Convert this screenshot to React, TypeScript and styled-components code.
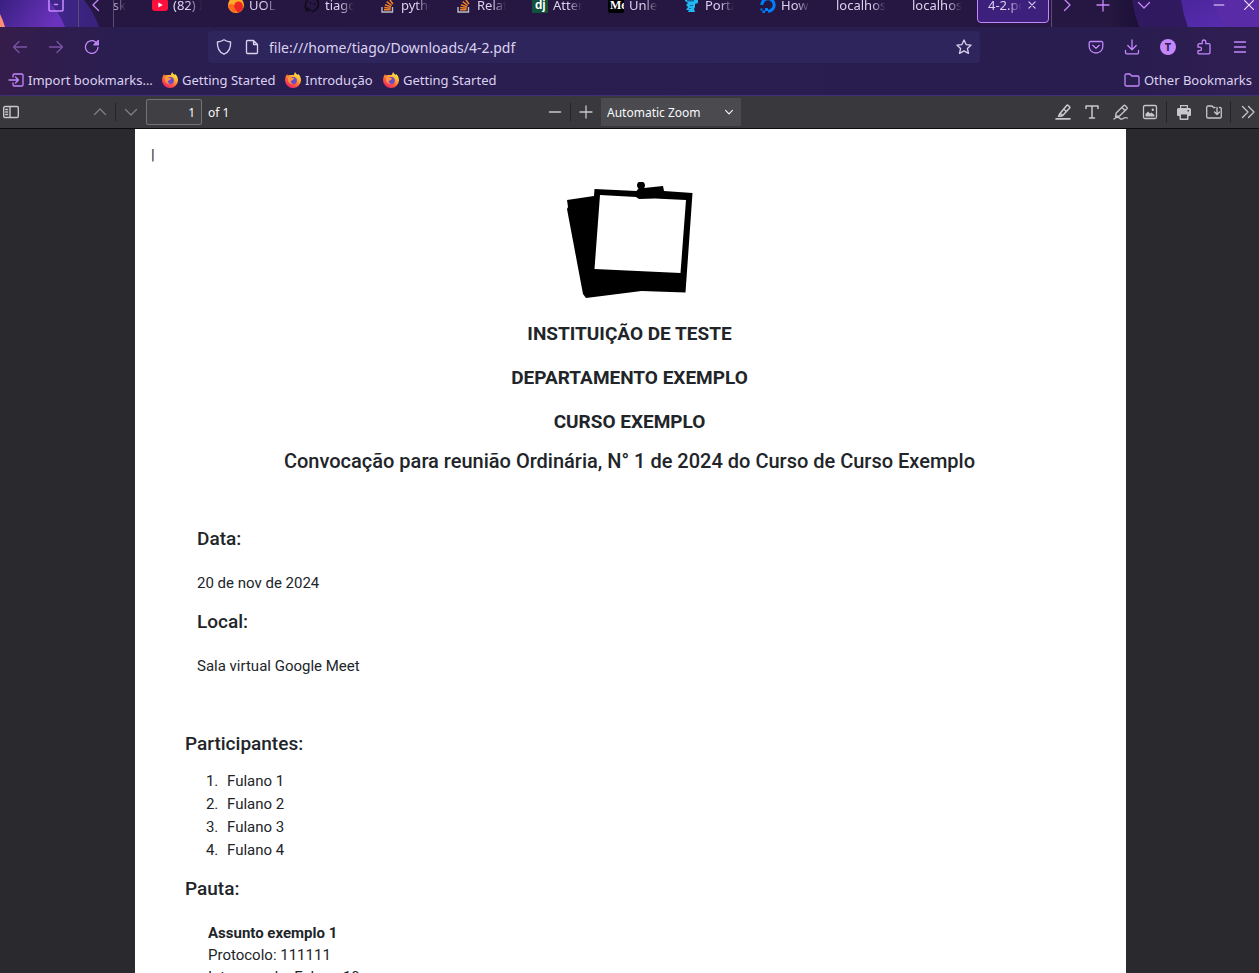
import React from "react";
import styled, { createGlobalStyle, css } from "styled-components";

const accent = "#c488fc";
const uiFont = `"Noto Sans", "Open Sans", sans-serif`;
const docFont = `Roboto, "Liberation Sans", sans-serif`;

const GlobalStyle = createGlobalStyle`
  *, *::before, *::after { box-sizing: border-box; }
  html, body, #root { height: 100%; }
  body { margin: 0; overflow: hidden; background: #2a2a2e; }
  button, input, select { font: inherit; color: inherit; }
  svg { display: block; flex: none; }
`;

const Window = styled.div`
  display: flex;
  flex-direction: column;
  height: 100%;
  overflow: hidden;
  font-family: ${uiFont};
`;

const Chrome = styled.header`
  flex: none;
  background: linear-gradient(90deg, #351d4b 0, #2a1d50 110px, #291c4f 90%, #301e52 100%);
  color: #dcd2f0;
`;

/* The strip is taller than its visible part: its upper edge runs off the window. */
const TabStrip = styled.div`
  position: relative;
  display: flex;
  align-items: center;
  height: 44px;
  margin-top: -17px;
  background: #251741;
  font-size: 13px;
`;

const ThemeArt = styled.svg<{ $side: "left" | "right" }>`
  position: absolute;
  bottom: 0;
  ${(p) => p.$side}: 0;
`;

const StripZone = styled.div<{ $width: number; $line?: "left" | "right"; $end?: boolean }>`
  position: relative;
  display: flex;
  align-items: center;
  justify-content: ${(p) => (p.$end ? "flex-end" : "center")};
  flex: none;
  width: ${(p) => p.$width}px;
  height: 100%;
  ${(p) => p.$line && css`border-${p.$line}: 1px solid #5d4c79;`}
`;

const WindowControls = styled.div`
  position: relative;
  display: flex;
  justify-content: flex-end;
  flex: none;
  width: 96px;
`;

const IconButton = styled.button<{ $width?: number; $dim?: boolean }>`
  display: flex;
  align-items: center;
  justify-content: center;
  flex: none;
  width: ${(p) => p.$width ?? 36}px;
  height: 32px;
  padding: 0;
  border: 0;
  background: none;
  color: ${accent};
  opacity: ${(p) => (p.$dim ? 0.5 : 1)};
`;

const TabList = styled.div`
  position: relative;
  display: flex;
  justify-content: flex-end;
  align-items: center;
  flex: 1;
  min-width: 0;
  height: 100%;
  overflow: hidden;
`;

const Tab = styled.button<{ $active?: boolean }>`
  display: flex;
  align-items: center;
  gap: 5px;
  flex: none;
  width: ${(p) => (p.$active ? 72 : 76)}px;
  height: 36px;
  margin: 0 ${(p) => (p.$active ? 2 : 0)}px;
  padding: ${(p) => (p.$active ? "0 11px 0 10px" : "0 13px")};
  border: ${(p) => (p.$active ? `1px solid ${accent}` : "0")};
  border-radius: 4px;
  background: ${(p) => (p.$active ? "#3d1f7c" : "none")};
  text-align: left;
`;

const TabLabel = styled.span<{ $end?: boolean }>`
  display: flex;
  justify-content: ${(p) => (p.$end ? "flex-end" : "flex-start")};
  flex: 1;
  min-width: 0;
  overflow: hidden;
  white-space: nowrap;
  mask-image: linear-gradient(to left, transparent, #000 14px);
`;

const NavBar = styled.div`
  display: flex;
  align-items: center;
  height: 40px;
  padding: 0 1px 0 2px;
`;

const UrlBox = styled.label`
  display: flex;
  align-items: center;
  flex: 1;
  min-width: 0;
  height: 32px;
  margin: 0 98px 0 98px;
  padding: 0 8px;
  gap: 12px;
  border-radius: 4px;
  background: #2e255c;
`;

const UrlInput = styled.input`
  flex: 1;
  min-width: 0;
  margin-left: -3px;
  padding: 0;
  border: 0;
  background: none;
  font-size: 14px;
  outline: 0;
`;

const BookmarksBar = styled.nav`
  display: flex;
  align-items: flex-start;
  height: 28px;
  padding: 3px 7px 0 8px;
  font-size: 13px;
  line-height: 20px;
`;

const Bookmark = styled.a<{ $width?: number }>`
  display: flex;
  align-items: center;
  gap: 4px;
  width: ${(p) => (p.$width ? `${p.$width}px` : "auto")};
  color: inherit;
  text-decoration: none;
  white-space: nowrap;
  &:last-child { margin-left: auto; }
`;

const PdfToolbar = styled.div`
  display: grid;
  grid-template-columns: 1fr auto 1fr;
  align-items: center;
  flex: none;
  height: 34px;
  border-top: 1px solid #3c2f73;
  border-bottom: 1px solid #0c0c0d;
  background: #38383d;
  color: #f9f9fa;
  font-size: 12px;
`;

const ToolGroup = styled.div<{ $align?: "end"; $shift?: number }>`
  display: flex;
  align-items: center;
  justify-content: ${(p) => (p.$align === "end" ? "flex-end" : "flex-start")};
  margin-left: ${(p) => p.$shift ?? 0}px;
`;

const ToolButton = styled(IconButton)`
  height: 28px;
  color: #c8c8ca;
  &:last-child:not(:first-child) { padding-left: 4px; }
`;

const Divider = styled.span<{ $tall?: boolean }>`
  flex: none;
  width: 1px;
  height: ${(p) => (p.$tall ? 22 : 18)}px;
  margin: 0 ${(p) => (p.$tall ? 2 : 0)}px;
  background: #232327;
`;

const PageField = styled.label`
  display: flex;
  align-items: center;
  gap: 6px;
`;

const PageInput = styled.input`
  width: 56px;
  height: 26px;
  padding: 0 6px;
  border: 1px solid #737378;
  border-radius: 2px;
  background: #404044;
  text-align: right;
`;

const ZoomField = styled.div`
  position: relative;
  color: #f9f9fa;
  svg { position: absolute; right: 7px; top: 9px; pointer-events: none; }
`;

const ZoomSelect = styled.select`
  display: block;
  width: 140px;
  height: 28px;
  padding: 0 6px;
  border: 0;
  appearance: none;
  background: #4a4a4f;
`;

const Viewer = styled.main`
  flex: 1;
  min-height: 0;
  padding: 0 133px 0 135px;
  overflow: hidden;
  background: #2a2a2e;
`;

const Paper = styled.article`
  min-height: 100%;
  padding: 16px 52px 0 50px;
  background: #fff;
  color: #212529;
  font: 15px/22px ${docFont};
`;

const Mark = styled.p`
  margin: 0 0 0 -34px;
  line-height: 20px;
`;

const Emblem = styled.svg`
  margin: 17px auto 21px;
`;

const Banner = styled.h1`
  margin: 0 0 16px;
  font-size: 19px;
  font-weight: 700;
  line-height: 28px;
  text-align: center;
`;

const Title = styled.h2`
  margin: -5px 0 50px;
  font-size: 20px;
  font-weight: 500;
  line-height: 28px;
  text-align: center;
`;

const Details = styled.section`
  padding-left: 12px;
  margin-bottom: 53px;
`;

const Heading = styled.h3`
  margin: 0;
  font-size: 19px;
  font-weight: 500;
  line-height: 28px;
`;

const Value = styled.p`
  margin: 19px 0 14px;
`;

const People = styled.ol`
  margin: 12px 0 13px;
  padding-left: 37px;
  line-height: 23px;
  li { padding-left: 5px; }
`;

const Topic = styled.section`
  margin-top: 19px;
  padding-left: 23px;
  p { margin: 0; }
`;

type IconProps = { d: string; size?: number; w?: number; fill?: boolean; color?: string };

const Icon = ({ d, size = 16, w = 1.3, fill, color = "currentColor" }: IconProps) => (
  <svg width={size} height={size} viewBox="0 0 16 16" aria-hidden="true"
    fill={fill ? color : "none"} stroke={fill ? "none" : color} strokeWidth={w}
    strokeLinecap="round" strokeLinejoin="round" fillRule="evenodd">
    <path d={d} />
  </svg>
);

const FirefoxIcon = () => (
  <svg width="16" height="16" viewBox="0 0 16 16" aria-hidden="true">
    <defs>
      <linearGradient id="ff-flame" x1="0.85" y1="0.05" x2="0.25" y2="1">
        <stop offset="0" stopColor="#fff44f" />
        <stop offset="0.35" stopColor="#ffb02e" />
        <stop offset="0.65" stopColor="#ff5a3c" />
        <stop offset="1" stopColor="#e8206f" />
      </linearGradient>
    </defs>
    <path fill="url(#ff-flame)" d="M10.2 0c.3 1.4 1.5 2 2.6 3.1.3-.3.4-.6.4-1 1.700 1.500 2.800 3.700 2.800 6.100A7.900 7.900 0 0 1 8 16 7.900 7.900 0 0 1 0 8.200C0 5.700.9 3.500 2.300 2c0 .7.1 1.200.4 1.600C3.500 3 4.300 2.800 5.300 2.900 6.800 3 8.400 3.300 9 2.700 9.300 1.900 9.600.8 10.200 0Z" />
    <circle cx="8.300" cy="8.600" r="3.600" fill="#6f49c8" />
    <path fill="#ff9640" d="M3 5.300c1.800-.7 3.300-.3 4.100.8.600.2 1.700.1 2.100.3-.1.900-1.400 1.100-1.900 1.700-.2.700-.9.900-1.700.9-.1 1.600 1.500 2.500 3.200 2.300-2.500 1.300-5.600-.4-5.800-3.100Z" />
  </svg>
);

const YoutubeIcon = () => (
  <svg width="16" height="16" viewBox="0 0 16 16"><rect y="2" width="16" height="12" rx="3" fill="#ff0f3c" /><path fill="#fff" d="m6.400 5.500 4.300 2.500-4.300 2.500Z" /></svg>
);
const UolIcon = () => (
  <svg width="16" height="16" viewBox="0 0 16 16"><circle cx="8" cy="8" r="8" fill="#ffa928" /><path fill="#ff6a22" d="M0 8.500c3-2.500 6-1.500 7 1l1 6.500A8 8 0 0 1 0 8.500Z" /><circle cx="10.500" cy="8.800" r="4.300" fill="#ee2522" /><path fill="#ee2522" d="M6.200 9c.5 3 1.500 5 4 6.700A8 8 0 0 0 15 11.800l-1-4Z" /></svg>
);
const GithubishIcon = () => (
  <svg width="16" height="16" viewBox="0 0 16 16" fill="none" stroke="#0d0a16" strokeWidth="1.500"><path d="M4 14.500C.5 12 .5 6 3.500 3.500M7 2c4-1.500 7.500 1 7.500 5S11.500 14 8 14.500M3 11c2 0 1.500 3 4.500 2.500M6 5.500l1 1M10 6.500l1 1" /></svg>
);
const StackIcon = () => (
  <svg width="16" height="16" viewBox="0 0 16 16" fill="none"><path stroke="#bcbbc4" strokeWidth="1.400" d="M2 10v5h10.500v-5" /><path stroke="#f48024" strokeWidth="1.500" d="M4 12.800h6.500M4.200 10.500l6.400.8M5 7.700l6 2.200M6.700 4.700l5 3.800M9.300 2l3.600 5" /></svg>
);
const BadgeSvg = ({ text, bg, family }: { text: string; bg: string; family: string }) => (
  <svg width="16" height="16" viewBox="0 0 16 16"><rect width="16" height="16" rx={text === "dj" ? 0 : 2} fill={bg} /><text x={text === "dj" ? 3 : 2} y="12" fill="#fff" fontSize="12" fontWeight="700" fontFamily={family}>{text}</text></svg>
);
const PortalIcon = () => (
  <svg width="16" height="16" viewBox="0 0 16 16"><path fill="#20b8f2" d="M1 3h13v3l-3 1v3l-1 2 1 3H4l1-2H2l2-3-2-2 2-2-3-2Z" /><path fill="#1d5f98" d="M3 3h7v1.500H3ZM6 8h3v1H6ZM5 11h2v1H5Z" /></svg>
);
const OceanIcon = () => (
  <svg width="16" height="16" viewBox="0 0 16 16"><path fill="none" stroke="#0080ff" strokeWidth="3" d="M1.800 8A6.200 6.200 0 1 1 8 14.200" /><path fill="#0080ff" d="M5 11h3v3H5ZM2.500 13.500H5V16H2.500ZM.5 11.500h2v2h-2Z" /></svg>
);

const tabs: { label: string; icon?: React.ReactNode }[] = [
  { label: "(82) Início", icon: <YoutubeIcon /> },
  { label: "UOL", icon: <UolIcon /> },
  { label: "tiago", icon: <GithubishIcon /> },
  { label: "pytho", icon: <StackIcon /> },
  { label: "Relat", icon: <StackIcon /> },
  { label: "Atten", icon: <BadgeSvg text="dj" bg="#14513a" family="Liberation Sans, sans-serif" /> },
  { label: "Unles", icon: <BadgeSvg text="Me" bg="#000" family="Liberation Serif, serif" /> },
  { label: "Portal", icon: <PortalIcon /> },
  { label: "How t", icon: <OceanIcon /> },
  { label: "localhost" },
  { label: "localhost" },
];

const icons = {
  archive: "M2 2h12a1 1 0 0 1 1 1v9.500a1.500 1.500 0 0 1-1.500 1.500h-11A1.500 1.500 0 0 1 1 12.500V3a1 1 0 0 1 1-1ZM6.500 7.500h3",
  left: "M10.500 2.500 5 8l5.500 5.500",
  right: "M5.500 2.500 11 8l-5.500 5.500",
  down: "M2.500 5.500 8 11l5.500-5.500",
  up: "M2.500 10.500 8 5l5.500 5.500",
  plus: "M8 2v12M2 8h12",
  minus: "M2.500 8h11",
  close: "M3 3l10 10M13 3 3 13",
  back: "M14.500 8h-13M7 2.500 1.500 8 7 13.500",
  forward: "M1.500 8h13M9 2.500 14.500 8 9 13.500",
  reload: "M14 8.500A6.300 6.300 0 1 1 11.500 3L14 5.500M14.300 1.500v4.300H10Z",
  shield: "M8 .8c2 1.400 4 2 6.600 2.200.3 6-1.600 10.200-6.600 12.200C3 13.200 1.100 9 1.400 3 4 2.800 6 2.200 8 .8Z",
  page: "M3.500 1.500h6l4 4v8a1 1 0 0 1-1 1h-9a1 1 0 0 1-1-1v-11a1 1 0 0 1 1-1ZM9.500 1.500v4h4",
  star: "m8 1 2.100 4.600 5 .5-3.700 3.400 1.100 4.900L8 11.900l-4.500 2.500 1.100-4.900L.9 6.100l5-.5Z",
  pocket: "M2.500 2.500h11a1.300 1.300 0 0 1 1.300 1.300V7.500a6.800 6.500 0 0 1-13.600 0V3.800a1.300 1.300 0 0 1 1.300-1.300ZM4.800 6.300 8 9.300l3.200-3",
  download: "M8 1v9.500M3.800 6.500 8 10.700l4.200-4.200M1.500 11.500v2a1.300 1.300 0 0 0 1.300 1.300h10.400a1.300 1.300 0 0 0 1.300-1.300v-2",
  puzzle: "M2.500 14.800h10.200a1.300 1.300 0 0 0 1.300-1.300V6a1.300 1.300 0 0 0-1.300-1.300H9.800V2.800a1.800 1.800 0 0 0-3.600 0v1.900H3.300A1.300 1.300 0 0 0 2 6v2.200h1.800a1.700 1.700 0 0 1 0 3.400H2v2.700Z",
  menu: "M2.500 3h11M2.500 8h11M2.500 13h11",
  importIn: "M5 5V3.300A1.300 1.300 0 0 1 6.300 2h7.400A1.300 1.300 0 0 1 15 3.300v9.400a1.300 1.300 0 0 1-1.300 1.300H6.300A1.300 1.300 0 0 1 5 12.700V11M1 8h9.500M7.500 5l3 3-3 3",
  folder: "M1 12.700V3.300A1.300 1.300 0 0 1 2.300 2h3.500l2 2h6A1.300 1.300 0 0 1 15 5.300v7.400a1.300 1.300 0 0 1-1.300 1.300H2.300A1.300 1.300 0 0 1 1 12.700Z",
  sidebar: "M2 2.500h12a1.300 1.300 0 0 1 1.300 1.300v8.400a1.300 1.300 0 0 1-1.300 1.300H2a1.300 1.300 0 0 1-1.300-1.300V3.800A1.300 1.300 0 0 1 2 2.500ZM7 2.500v11M2.700 5.500h2M2.700 8h2M2.700 10.500h2",
  highlight: "M1 14.900h14M3.500 12.300 5 9.500l6.500-7.800a1.300 1.300 0 0 1 1.800-.1l1 .9a1.300 1.300 0 0 1 .1 1.800L7.700 11.500l-2 .8ZM5 9.500l2.700 2M9 5.500l2.500 2",
  text: "M2 4.500V2h12v2.500M8 2v12M5.500 14h5",
  draw: "m2.500 12.500.7-3.500 7.300-7.300a1.300 1.300 0 0 1 1.800 0l1.500 1.500a1.300 1.300 0 0 1 0 1.800L6.500 12ZM9 3.500 12 6.500M1 15c2.500-2 5-1.500 6-.5s3 .3 4-.5 2-.5 3.500 0",
  print: "M4 1h8v3h1.500A1.500 1.500 0 0 1 15 5.500V11a1 1 0 0 1-1 1h-1.500v3a1 1 0 0 1-1 1h-7a1 1 0 0 1-1-1v-3H2a1 1 0 0 1-1-1V5.500A1.500 1.500 0 0 1 2.500 4H4ZM5.200 2.200V4h5.600V2.200ZM5 10.500v4h6v-4ZM11.500 6v1.500H13V6Z",
  save: "M9 3.500H7.500L6 2H2A1.300 1.300 0 0 0 .7 3.300v9.400A1.300 1.300 0 0 0 2 14h12a1.300 1.300 0 0 0 1.300-1.300V4.800A1.300 1.300 0 0 0 14 3.500h-.5M11 3.500v7M8.500 8l2.500 2.500L13.500 8",
  more: "M2.500 2.500 8 8l-5.500 5.500M8.500 2.500 14 8l-5.500 5.500",
};

const ImageIcon = () => (
  <svg width="16" height="16" viewBox="0 0 16 16" aria-hidden="true"><rect x="1.500" y="1.500" width="13" height="13" rx="1.500" fill="none" stroke="currentColor" strokeWidth="1.300" /><path fill="currentColor" d="M3.500 12.500V10L6 7.500l2 2 1.500-1 3 2.500v1.500Z" /><circle cx="10.800" cy="5.800" r="1.200" fill="currentColor" /></svg>
);

const AccountIcon = () => (
  <svg width="16" height="16" viewBox="0 0 16 16" aria-hidden="true"><circle cx="8" cy="8" r="8" fill={accent} /><text x="8" y="12" textAnchor="middle" fontSize="11" fontWeight="700" fontFamily="Noto Sans, sans-serif" fill="#2a1d50">T</text></svg>
);

export default function App() {
  return (
    <Window>
      <GlobalStyle />
      <Chrome>
        <TabStrip>
          <ThemeArt $side="left" width="114" height="27" viewBox="0 0 114 27" aria-hidden="true">
            <defs>
              <linearGradient id="art-l" x1="0" x2="1" y1="0" y2="0.300"><stop offset="0" stopColor="#3a2080" /><stop offset="1" stopColor="#6a32bd" /></linearGradient>
              <linearGradient id="art-m" x1="0" x2="1"><stop offset="0" stopColor="#4a2a9c" /><stop offset="1" stopColor="#38227a" /></linearGradient>
            </defs>
            <path fill="url(#art-m)" d="M0 0h84q10 12 15 27H0Z" />
            <path fill="url(#art-l)" d="M0 0h48q11 12 17 27H0Z" />
            <path fill="#ff8c76" d="M0 14q3 6 5 13H0Z" />
          </ThemeArt>
          <ThemeArt $side="right" width="150" height="27" viewBox="0 0 150 27" aria-hidden="true">
            <defs>
              <linearGradient id="art-r" x1="0" x2="1" y1="0" y2="1"><stop offset="0" stopColor="#4a259c" /><stop offset="1" stopColor="#5b2fb4" /></linearGradient>
              <linearGradient id="art-s" x1="0" x2="1"><stop offset="0" stopColor="#1b1036" stopOpacity="0" /><stop offset="1" stopColor="#1b1036" /></linearGradient>
            </defs>
            <path fill="url(#art-s)" d="M0 0h30v27H0Z" />
            <path fill="#31195f" d="M23 0h127v27H30Q25 14 23 0Z" />
            <path fill="url(#art-r)" d="M72 0h78v27H79Q74 14 72 0Z" />
            <path fill="#5a2ba6" d="M103 0h47v27h-34Z" />
          </ThemeArt>
          <StripZone $width={79} $line="right" $end>
            <IconButton $width={44} aria-label="Firefox View"><Icon d={icons.archive} w={1.6} /></IconButton>
          </StripZone>
          <StripZone $width={35} $line="right">
            <IconButton $width={34} aria-label="Scroll tabs left"><Icon d={icons.left} /></IconButton>
          </StripZone>
          <TabList>
            <Tab><TabLabel $end>desk</TabLabel></Tab>
            {tabs.map((t, i) => (
              <Tab key={i}>{t.icon}<TabLabel>{t.label}</TabLabel></Tab>
            ))}
            <Tab $active>
              <TabLabel>4-2.pdf</TabLabel>
              <Icon d={icons.close} size={10} w={1.8} />
            </Tab>
          </TabList>
          <StripZone $width={112} $line="left">
            <IconButton $width={30} aria-label="Scroll tabs right"><Icon d={icons.right} /></IconButton>
            <IconButton $width={42} aria-label="New tab"><Icon d={icons.plus} /></IconButton>
            <IconButton $width={39} aria-label="List all tabs"><Icon d={icons.down} /></IconButton>
          </StripZone>
          <WindowControls>
            <IconButton $width={40} aria-label="Minimize"><Icon d={icons.minus} size={14} color="#efe6ff" /></IconButton>
            <IconButton $width={20} aria-label="Close"><Icon d={icons.close} size={14} color="#efe6ff" /></IconButton>
          </WindowControls>
        </TabStrip>
        <NavBar>
          <IconButton $dim aria-label="Back"><Icon d={icons.back} /></IconButton>
          <IconButton $dim aria-label="Forward"><Icon d={icons.forward} /></IconButton>
          <IconButton aria-label="Reload"><Icon d={icons.reload} /></IconButton>
          <UrlBox>
            <Icon d={icons.shield} />
            <Icon d={icons.page} />
            <UrlInput aria-label="Address" defaultValue="file:///home/tiago/Downloads/4-2.pdf" />
            <Icon d={icons.star} />
          </UrlBox>
          <IconButton aria-label="Save to Pocket"><Icon d={icons.pocket} /></IconButton>
          <IconButton aria-label="Downloads"><Icon d={icons.download} /></IconButton>
          <IconButton aria-label="Account"><AccountIcon /></IconButton>
          <IconButton aria-label="Extensions"><Icon d={icons.puzzle} /></IconButton>
          <IconButton aria-label="Menu"><Icon d={icons.menu} /></IconButton>
        </NavBar>
        <BookmarksBar>
          <Bookmark href="#" $width={154}><Icon d={icons.importIn} color={accent} />Import bookmarks…</Bookmark>
          <Bookmark href="#" $width={123}><FirefoxIcon />Getting Started</Bookmark>
          <Bookmark href="#" $width={98}><FirefoxIcon />Introdução</Bookmark>
          <Bookmark href="#"><FirefoxIcon />Getting Started</Bookmark>
          <Bookmark href="#"><Icon d={icons.folder} color={accent} />Other Bookmarks</Bookmark>
        </BookmarksBar>
      </Chrome>
      <PdfToolbar>
        <ToolGroup>
          <ToolButton $width={22} aria-label="Toggle sidebar"><Icon d={icons.sidebar} w={1.4} /></ToolButton>
          <ToolGroup $shift={63}>
            <ToolButton $width={30} $dim aria-label="Previous page"><Icon d={icons.up} /></ToolButton>
            <Divider />
            <ToolButton $width={30} $dim aria-label="Next page"><Icon d={icons.down} /></ToolButton>
            <PageField><PageInput defaultValue="1" /> of 1</PageField>
          </ToolGroup>
        </ToolGroup>
        <ToolGroup $shift={22}>
          <ToolButton $width={30} aria-label="Zoom out"><Icon d={icons.minus} /></ToolButton>
          <Divider />
          <ToolButton $width={30} aria-label="Zoom in"><Icon d={icons.plus} /></ToolButton>
          <ZoomField>
            <ZoomSelect aria-label="Zoom" defaultValue="auto"><option value="auto">Automatic Zoom</option></ZoomSelect>
            <Icon d={icons.down} size={10} w={1.8} />
          </ZoomField>
        </ToolGroup>
        <ToolGroup $align="end">
          <ToolButton $width={29} aria-label="Highlight"><Icon d={icons.highlight} w={1.6} /></ToolButton>
          <ToolButton $width={29} aria-label="Text"><Icon d={icons.text} w={1.5} /></ToolButton>
          <ToolButton $width={29} aria-label="Draw"><Icon d={icons.draw} /></ToolButton>
          <ToolButton $width={29} aria-label="Add image"><ImageIcon /></ToolButton>
          <Divider $tall />
          <ToolButton $width={30} aria-label="Print"><Icon d={icons.print} fill /></ToolButton>
          <ToolButton $width={29} aria-label="Save"><Icon d={icons.save} /></ToolButton>
          <Divider $tall />
          <ToolButton $width={26} aria-label="Tools"><Icon d={icons.more} /></ToolButton>
        </ToolGroup>
      </PdfToolbar>
      <Viewer>
        <Paper>
          <Mark>|</Mark>
          <Emblem width="128" height="117" viewBox="0 0 128 117" aria-hidden="true">
            <path fillRule="evenodd" d="M1 18l27-4 .500-7 42 2 2-2.500a4 4 0 1 1 5.500-.5l19-2 1 5 28.500 2-7 99.500-44-1.500-55.500 7-3-4L1 27l1-2ZM34 13l-5.500 74 86 4 5.500-73-31-1.500-16 .5-3-2Z" />
          </Emblem>
          <Banner>INSTITUIÇÃO DE TESTE</Banner>
          <Banner as="p">DEPARTAMENTO EXEMPLO</Banner>
          <Banner as="p">CURSO EXEMPLO</Banner>
          <Title>Convocação para reunião Ordinária, N° 1 de 2024 do Curso de Curso Exemplo</Title>
          <Details>
            <Heading>Data:</Heading>
            <Value>20 de nov de 2024</Value>
            <Heading>Local:</Heading>
            <Value>Sala virtual Google Meet</Value>
          </Details>
          <Heading>Participantes:</Heading>
          <People>
            <li>Fulano 1</li>
            <li>Fulano 2</li>
            <li>Fulano 3</li>
            <li>Fulano 4</li>
          </People>
          <Heading>Pauta:</Heading>
          <Topic>
            <p><strong>Assunto exemplo 1</strong></p>
            <p>Protocolo: 111111</p>
            <p>Interessado: Fulano 10</p>
          </Topic>
        </Paper>
      </Viewer>
    </Window>
  );
}
